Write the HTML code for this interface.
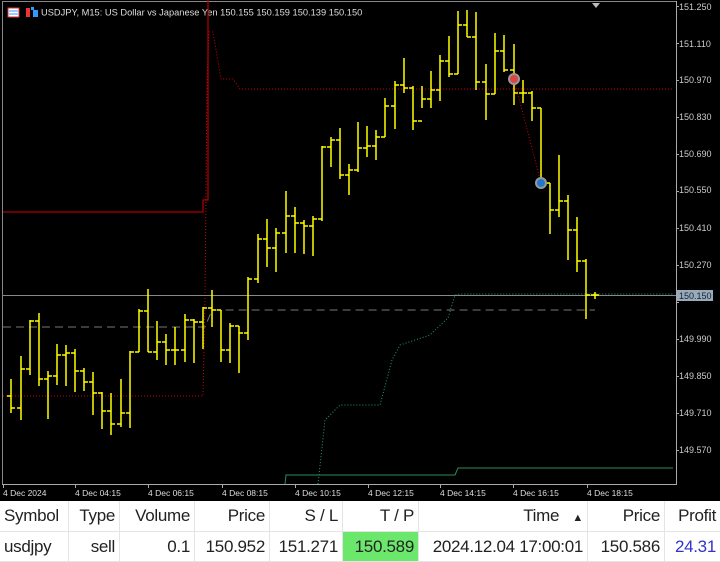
<!DOCTYPE html>
<html><head><meta charset="utf-8"><style>
body{margin:0;width:720px;height:559px;overflow:hidden;background:#000;font-family:"Liberation Sans",sans-serif}
#c{position:absolute;left:0;top:0}
table{position:absolute;left:0;top:501px;width:720px;border-collapse:collapse;background:#fff;font-family:"Liberation Sans",sans-serif;font-size:17px;color:#222;letter-spacing:-0.3px}
td{height:29px;padding:0 4px;text-align:right;border-right:1px solid #e4e4e4;border-bottom:1px solid #e4e4e4;white-space:nowrap}
tr:first-child td{height:30px}
</style></head><body>
<svg id="c" width="720" height="501" xmlns="http://www.w3.org/2000/svg" font-family="Liberation Sans, sans-serif" font-size="9">
<rect width="720" height="501" fill="#000"/>
<line x1="2" y1="1.5" x2="676" y2="1.5" stroke="#888"/>
<line x1="2.5" y1="1" x2="2.5" y2="484" stroke="#888"/>
<line x1="676.5" y1="1" x2="676.5" y2="484" stroke="#aaa"/>
<line x1="2" y1="484.5" x2="677" y2="484.5" stroke="#aaa"/>
<polygon points="592,3 600,3 596,8" fill="#bbb"/>
<rect x="8" y="8" width="11" height="9" fill="#fff" stroke="#d33"/><line x1="9" y1="11" x2="18" y2="11" stroke="#39f"/><line x1="9" y1="14" x2="18" y2="14" stroke="#39f"/>
<rect x="26" y="8" width="4" height="9" fill="#e33"/><rect x="31" y="7" width="3" height="3" fill="#39f"/><rect x="33" y="10" width="5" height="7" fill="#39f"/>
<text x="41" y="15.5" fill="#ddd" font-size="9.3">USDJPY, M15:  US Dollar vs Japanese Yen  150.155 150.159 150.139 150.150</text>
<polyline points="3,212 203,212 203,200 208,200 208,0" fill="none" stroke="#a00" stroke-width="1.3"/>
<polyline points="3,396 203,396 205,300 207,80 209,32 213,32 221,79 233,79 240,89 673,89" fill="none" stroke="#c00" stroke-dasharray="1,2"/>
<polyline points="3,327 205,327 212,310 595,310" fill="none" stroke="#777" stroke-dasharray="8,5"/>
<line x1="3" y1="295.5" x2="676" y2="295.5" stroke="#888"/>
<polyline points="318,484 325,420 340,405 352,405 358,405 380,405 392,360 400,345 430,335 448,318 455,295 460,294 673,294" fill="none" stroke="#2a9a6a" stroke-dasharray="1,2"/>
<polyline points="285,484 286,475 455,475 458,468 673,468" fill="none" stroke="#2e8b57"/>
<g id="bars" stroke="#ff0" stroke-width="1.5" fill="none"></g>
<line x1="514" y1="79" x2="541" y2="183" stroke="#c00" stroke-dasharray="1,2"/>
<circle cx="514" cy="79" r="5" fill="#d44" stroke="#999" stroke-width="2"/>
<circle cx="541" cy="183" r="5" fill="#27c" stroke="#999" stroke-width="2"/>
<g fill="#ccc" font-size="9">
<text x="679" y="10">151.250</text><text x="679" y="47">151.110</text><text x="679" y="83">150.970</text><text x="679" y="120">150.830</text><text x="679" y="157">150.690</text><text x="679" y="193">150.550</text><text x="679" y="231">150.410</text><text x="679" y="268">150.270</text><text x="679" y="342">149.990</text><text x="679" y="379">149.850</text><text x="679" y="416">149.710</text><text x="679" y="453">149.570</text>
</g>
<rect x="677" y="290" width="36" height="11" fill="#9ab"/>
<text x="679" y="299" fill="#123" font-size="9">150.150</text>
<g fill="#ddd" font-size="8.5">
<text x="3" y="496">4 Dec 2024</text><text x="75" y="496">4 Dec 04:15</text><text x="148" y="496">4 Dec 06:15</text><text x="222" y="496">4 Dec 08:15</text><text x="295" y="496">4 Dec 10:15</text><text x="368" y="496">4 Dec 12:15</text><text x="440" y="496">4 Dec 14:15</text><text x="513" y="496">4 Dec 16:15</text><text x="587" y="496">4 Dec 18:15</text>
</g>
<g id="ticks" stroke="#aaa"></g>
</svg>
<table>
<tr><td style="text-align:left;width:60px">Symbol</td><td style="width:42px">Type</td><td style="width:66px">Volume</td><td style="width:66px">Price</td><td style="width:64px">S / L</td><td style="width:67px">T / P</td><td style="width:160px">Time &nbsp; <span style="font-size:11px">▲</span></td><td style="width:68px">Price</td><td style="border-right:none">Profit</td></tr>
<tr><td style="text-align:left">usdjpy</td><td>sell</td><td>0.1</td><td>150.952</td><td>151.271</td><td style="background:#6be86b">150.589</td><td>2024.12.04 17:00:01</td><td>150.586</td><td style="color:#33c;border-right:none">24.31</td></tr>
</table>
<script>
var d=[[11,379,413,396,408],[21,356,420,408,369],[30,320,375,369,321],[39,313,386,321,379],[48,371,419,379,376],[57,344,385,376,355],[66,345,386,355,353],[75,349,392,353,371],[84,368,391,371,382],[93,372,415,382,393],[102,392,429,393,411],[111,393,435,411,424],[121,379,427,424,413],[130,351,428,413,352],[139,309,352,352,311],[148,289,352,311,352],[157,321,360,352,342],[166,334,365,342,350],[175,327,365,350,350],[185,314,362,350,320],[194,319,363,320,322],[203,307,349,322,308],[212,290,327,308,310],[221,310,362,310,350],[230,323,363,350,326],[239,326,373,326,333],[248,277,340,333,279],[258,234,283,279,239],[267,219,267,239,248],[276,228,272,248,233],[286,191,253,233,216],[295,207,253,216,223],[304,220,254,223,226],[313,216,256,226,219],[322,146,221,219,147],[331,137,167,147,140],[340,128,179,140,175],[349,164,195,175,170],[358,122,172,170,148],[367,126,157,148,146],[376,130,160,146,137],[385,98,137,137,106],[395,81,129,106,85],[404,58,93,85,88],[413,86,130,88,121],[422,86,108,121,99],[431,71,108,99,90],[440,55,101,90,61],[449,36,77,61,74],[458,11,74,74,25],[467,10,37,25,37],[476,12,90,37,82],[486,64,120,82,94],[495,33,94,94,51],[504,35,72,51,70],[514,44,105,70,93],[523,80,103,93,93],[532,91,121,93,108],[541,108,184,108,183],[550,183,234,183,210],[559,155,217,210,201],[568,195,260,201,230],[577,217,272,230,261],[586,259,319,261,295],[595,292,299,295,295]];
var s='';d.forEach(function(b){s+='<line x1="'+b[0]+'" y1="'+b[1]+'" x2="'+b[0]+'" y2="'+b[2]+'"/><line x1="'+(b[0]-4)+'" y1="'+b[3]+'" x2="'+b[0]+'" y2="'+b[3]+'"/><line x1="'+b[0]+'" y1="'+b[4]+'" x2="'+(b[0]+4)+'" y2="'+b[4]+'"/>';});
document.getElementById('bars').innerHTML=s;
var t='';[3,75,148,222,295,368,440,513,587].forEach(function(x){t+='<line x1="'+(x+.5)+'" y1="484" x2="'+(x+.5)+'" y2="488"/>';});
for(var y=10;y<470;y+=37){t+='<line x1="676" y1="'+(y-3.5)+'" x2="679" y2="'+(y-3.5)+'"/>';}
document.getElementById('ticks').innerHTML=t;
</script>
</body></html>
